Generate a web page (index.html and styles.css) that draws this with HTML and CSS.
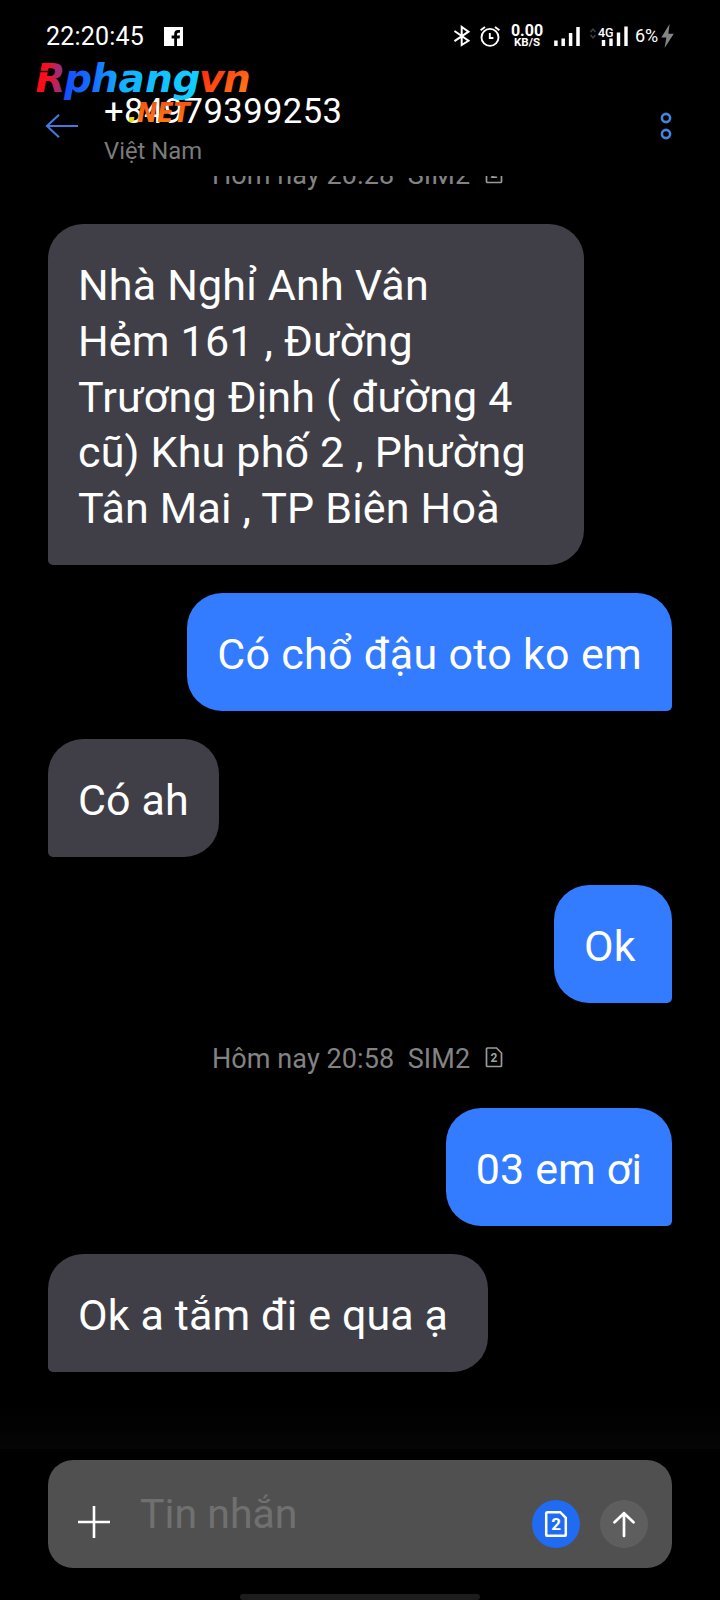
FILE: index.html
```html
<!DOCTYPE html>
<html lang="vi">
<head>
<meta charset="utf-8">
<title>+84979399253</title>
<link rel="stylesheet" href="styles.css">
</head>
<body>
<div class="phone">
  <div class="statusbar">
    <span class="clock">22:20:45</span>
    <svg class="fb" width="19" height="19" viewBox="0 0 19 19"><rect width="19" height="19" fill="#fff"/><path d="M10.2 19V11.6H7.6V8.6h2.6V7q0-4 3.8-4h2v2.7h-1.500q-1.500 0-1.500 1.600v1.300h3l-.4 3h-2.600V19z" fill="#000"/></svg>
    <span class="grow"></span>
    <svg class="bt" width="18" height="22" viewBox="0 0 18 22"><path d="M1.500 6 15.500 15.800 8.700 20V2L15.500 6.700 1.500 16.200" fill="none" stroke="#fff" stroke-width="2"/></svg>
    <svg class="alarm" width="22" height="22" viewBox="0 0 22 22" fill="none" stroke="#fff" stroke-width="1.900"><circle cx="11" cy="12.400" r="8.500"/><path d="M10.800 8v5h3.600M1.600 5.200 6 2M16 2l4.400 3.200"/></svg>
    <span class="speed"><b class="rate">0.00</b><b class="unit">KB/S</b></span>
    <svg class="sig1" width="26" height="21" viewBox="0 0 26 21"><path d="M1.900 14.500V20M9.200 12.500V20M16.600 7V20M24 1V20" stroke="#fff" stroke-width="3.500"/></svg>
    <svg class="sig2" width="40" height="24" viewBox="0 0 40 24"><path d="M1.500 8 4 5.200 6.500 8M1.500 11 4 13.800 6.500 11" fill="none" stroke="#3c3c3c" stroke-width="1.600"/><path d="M14.500 16V22M22 14.500V22M29.500 8.500V22M37 2.500V22" stroke="#fff" stroke-width="3.400"/><text x="9" y="13" class="net">4G</text></svg>
    <span class="batt">6%</span>
    <svg class="bolt" width="13" height="24" viewBox="0 0 13 24"><path d="M8.600 0 .3 13.500H5.400L3.600 24 12.800 9.700H7.400z" fill="#858585"/></svg>
  </div>

  <header class="topbar">
    <svg class="back" width="34" height="26" viewBox="0 0 34 26"><path d="M14 1.800 2 13 14 24.200M2 13H33" fill="none" stroke="#4379dc" stroke-width="2.100"/></svg>
    <div class="who"><div class="number">+84979399253</div><div class="country">Việt Nam</div></div>
    <svg class="more" width="14" height="30" viewBox="0 0 14 30" fill="none" stroke="#4b80db" stroke-width="2.600"><circle cx="7" cy="7" r="4.100"/><circle cx="7" cy="23" r="4.100"/></svg>
  </header>

  <main class="thread">
    <div class="stamp cut"><div class="stampline"><span class="when">Hôm nay 20:28&nbsp; SIM2</span><svg class="sim" width="18" height="21" viewBox="0 0 18 21"><path d="M2.500 1H11.500L16.500 6V18.500Q16.500 19.500 15.500 19.500H2.500Q1.500 19.500 1.500 18.500V2Q1.500 1 2.500 1Z" fill="none" stroke="#9a9a9a" stroke-width="1.700"/><text x="5.500" y="14.500" class="simno">2</text></svg></div></div>
    <div class="bubble in long">Nhà Nghỉ Anh Vân<br>Hẻm 161 , Đường<br>Trương Định ( đường 4<br>cũ) Khu phố 2 , Phường<br>Tân Mai , TP Biên Hoà</div>
    <div class="bubble out loose">Có chổ đậu oto ko em</div>
    <div class="bubble in">Có ah</div>
    <div class="bubble out">Ok</div>
    <div class="stamp"><div class="stampline"><span class="when">Hôm nay 20:58&nbsp; SIM2</span><svg class="sim" width="18" height="21" viewBox="0 0 18 21"><path d="M2.500 1H11.500L16.500 6V18.500Q16.500 19.500 15.500 19.500H2.500Q1.500 19.500 1.500 18.500V2Q1.500 1 2.500 1Z" fill="none" stroke="#9a9a9a" stroke-width="1.700"/><text x="5.500" y="14.500" class="simno">2</text></svg></div></div>
    <div class="bubble out">03 em ơi</div>
    <div class="bubble in wide">Ok a tắm đi e qua ạ</div>
  </main>

  <footer class="composer">
    <svg class="plus" width="32" height="32" viewBox="0 0 32 32"><path d="M16 0V32M0 16H32" stroke="#fff" stroke-width="2.600"/></svg>
    <span class="hint">Tin nhắn</span>
    <svg class="pick" width="48" height="48" viewBox="0 0 48 48"><circle cx="24" cy="24" r="24" fill="#216bf3"/><path d="M15.500 12.200H28.200L33.800 17.800V34.500Q33.800 35.800 32.500 35.800H15.500Q14.200 35.800 14.200 34.500V13.500Q14.200 12.200 15.500 12.200Z" fill="none" stroke="#fff" stroke-width="2.500"/><text x="19.200" y="30.200" class="pickno">2</text></svg>
    <svg class="send" width="48" height="48" viewBox="0 0 48 48"><circle cx="24" cy="24" r="24" fill="#5e5e5e"/><path d="M24 36V13.200M14.500 22.200 24 13.200 33.500 22.200" fill="none" stroke="#fff" stroke-width="2.700" stroke-linecap="round" stroke-linejoin="round"/></svg>
  </footer>
  <div class="homebar"></div>

  <svg class="watermark" width="230" height="74" viewBox="0 0 230 74">
    <defs>
      <linearGradient id="wm" gradientUnits="userSpaceOnUse" x1="6" y1="0" x2="220" y2="0">
        <stop offset="0" stop-color="#ff0b12"/><stop offset=".06" stop-color="#f51022"/><stop offset=".12" stop-color="#8a3390"/><stop offset=".14" stop-color="#154fff"/><stop offset=".28" stop-color="#1674ff"/><stop offset=".4" stop-color="#13b0ff"/><stop offset=".7" stop-color="#12ccff"/><stop offset=".76" stop-color="#12ccff"/>
      </linearGradient>
      <linearGradient id="vn" x1="0" y1="0" x2="1" y2="1"><stop offset=".2" stop-color="#ff2a10"/><stop offset="1" stop-color="#ff8a18"/></linearGradient>
      <linearGradient id="net" x1="0" y1="0" x2="0" y2="1"><stop offset="0" stop-color="#f04d10"/><stop offset="1" stop-color="#ff8418"/></linearGradient>
    </defs>
    <text x="5.500 34 61 88.500 115 142.500" y="36.700" class="brand" fill="url(#wm)">Rphang</text>
    <text x="169 193" y="36.700" class="brand" fill="url(#vn)">vn</text>
    <path d="M8 16.500H18" stroke="#000" stroke-width="1.300"/>
    <text x="98" y="66.500" class="tld" textLength="62" lengthAdjust="spacingAndGlyphs"><tspan fill="#e8e000">.</tspan><tspan fill="url(#net)">NET</tspan></text>
  </svg>
</div>
</body>
</html>
```
FILE: styles.css
```css
* { box-sizing: border-box; }
body { margin: 0; background: #000; }
svg { display: block; flex: none; }
.phone {
  position: relative;
  width: 720px;
  height: 1600px;
  overflow: hidden;
  display: flex;
  flex-direction: column;
  background: #000;
  color: #fff;
  font-family: Roboto, "Noto Sans", sans-serif;
}
.statusbar {
  height: 72px;
  padding: 0 46px;
  display: flex;
  align-items: center;
  flex: none;
}
.grow { flex: 1; }
.clock { padding-top: 1px; font-size: 25px; line-height: 30px; letter-spacing: 0.2px; }
.fb { margin-left: 20px; }
.alarm { margin-left: 8px; }
.speed {
  width: 34px;
  margin-left: 9px;
  display: flex;
  flex-direction: column;
  align-items: center;
}
.rate { font-size: 16px; line-height: 13px; }
.unit { font-size: 11.500px; line-height: 11px; }
.sig1 { margin-left: 10px; }
.sig2 { margin-left: 9px; }
.net { font: 500 12.500px Roboto, sans-serif; fill: #fff; }
.batt { width: 25px; margin-left: 6px; font-size: 18px; line-height: 22px; }
.bolt { margin-left: 1px; }

.topbar {
  height: 104px;
  padding: 0 47px 0 45px;
  display: flex;
  flex: none;
}
.back { margin-top: 41px; }
.who { margin-left: 25px; flex: 1; }
.number { margin-top: 18px; font-size: 34.600px; line-height: 42px; letter-spacing: 0.420px; }
.country { margin-top: 5px; font-size: 23.800px; line-height: 28px; color: #7b7b7b; }
.more { margin-top: 39px; }

.thread {
  height: 1284px;
  padding: 0 48px;
  display: flex;
  flex-direction: column;
  align-items: flex-start;
  flex: none;
  background: linear-gradient(#000, #050505) 0 1229px / 100% 44px no-repeat;
}
.bubble {
  margin-top: 28px;
  height: 118px;
  min-width: 118px;
  padding: 33px 30px 29px;
  border-radius: 35px;
  font-size: 43px;
  line-height: 56px;
  letter-spacing: 0.120px;
  white-space: nowrap;
}
.in { background: #403f47; border-bottom-left-radius: 5px; }
.out { background: #337bff; border-bottom-right-radius: 5px; align-self: flex-end; }
.loose { letter-spacing: 0.300px; }
.long { width: 536px; height: 341px; margin-top: 0; padding-top: 34px; line-height: 55.800px; letter-spacing: 0.180px; }
.wide { width: 440px; }
.stamp {
  height: 77px;
  width: 624px;
  padding: 39px 0 0 164px;
  color: #838383;
  font-size: 27px;
  line-height: 32px;
}
.stampline { display: flex; height: 32px; }
.when { width: 259px; padding-top: 1px; letter-spacing: 0.080px; white-space: nowrap; }
.cut { height: 48px; padding-top: 0; overflow: hidden; }
.cut .stampline { margin-top: -18px; }
.sim { margin: 5px 0 0 14px; }
.simno { font: 700 12px Roboto, sans-serif; fill: #a2a2a2; }

.composer {
  height: 108px;
  width: 624px;
  margin-left: 48px;
  padding-right: 24px;
  border-radius: 25px;
  background: #505050;
  display: flex;
  flex: none;
}
.plus { margin: 46px 0 0 30px; }
.hint { margin: 29px 0 0 30px; flex: 1; font-size: 41px; line-height: 50px; color: #707070; }
.pick { margin-top: 40px; }
.pickno { font: 700 17px Roboto, sans-serif; fill: #fff; }
.send { margin: 40px 0 0 20px; }
.homebar {
  width: 240px;
  height: 6px;
  margin: 26px auto 0;
  border-radius: 3px;
  background: #1d1d1d;
  flex: none;
}
.watermark { position: absolute; left: 30px; top: 55px; }
.brand { font: italic 700 39px "DejaVu Sans", sans-serif; }
.tld { font: italic 700 26px "DejaVu Sans", sans-serif; }
```
